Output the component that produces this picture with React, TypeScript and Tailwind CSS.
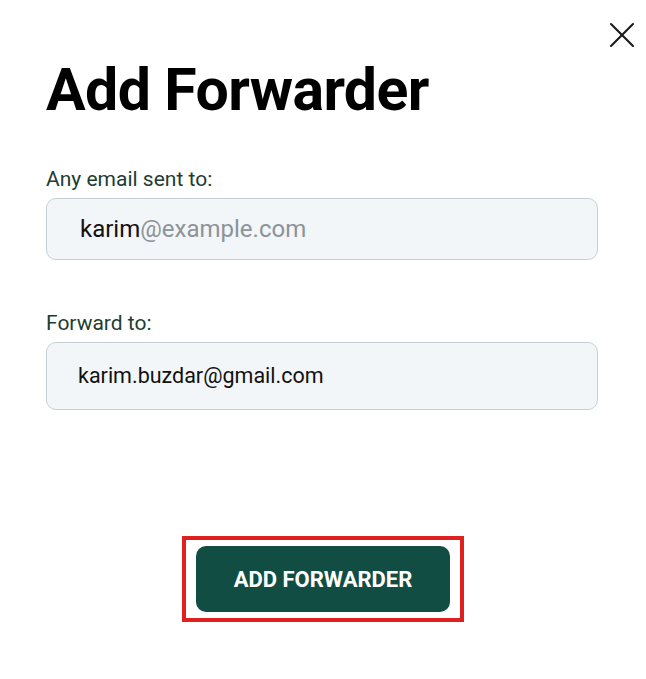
import { X } from 'lucide-react';

const font = { fontFamily: 'Roboto, "Liberation Sans", sans-serif' };

const App = () => {
  return (
    <div className="relative w-[646px] h-[679px] bg-white" style={font}>
      <button className="absolute top-[13px] right-[2px] text-[#1a1a1a]" aria-label="Close">
        <X size={44} strokeWidth={1.15} />
      </button>

      <div className="px-[46px] pt-[58px]">
        <h1 className="text-[59px] leading-[64px] font-bold text-black tracking-[-0.6px]">Add Forwarder</h1>

        <label className="block mt-[45px] text-[21px] leading-[24px] text-[#1d3d32]">Any email sent to:</label>
        <div className="mt-[7px] w-[552px] h-[62px] rounded-[10px] border border-[#c7d0d4] bg-[#f3f6f8] flex items-center px-[33px] text-[24px]">
          <span className="text-[#111]">karim</span>
          <span className="text-[#8c9399]">@example.com</span>
        </div>

        <label className="block mt-[51px] text-[21px] leading-[24px] text-[#1d3d32]">Forward to:</label>
        <div className="mt-[7px] w-[552px] h-[68px] rounded-[10px] border border-[#c7d0d4] bg-[#f3f6f8] flex items-center px-[31px] text-[21.5px] text-[#111]">
          karim.buzdar@gmail.com
        </div>

        <div className="mt-[126px] flex justify-center">
          <div className="border-[4px] border-[#e0201f] px-[10px] py-[6px]">
            <button className="w-[254px] h-[66px] rounded-[10px] bg-[#124d43] text-white text-[22px] font-bold">
              ADD FORWARDER
            </button>
          </div>
        </div>
      </div>
    </div>
  );
};

export default App;
